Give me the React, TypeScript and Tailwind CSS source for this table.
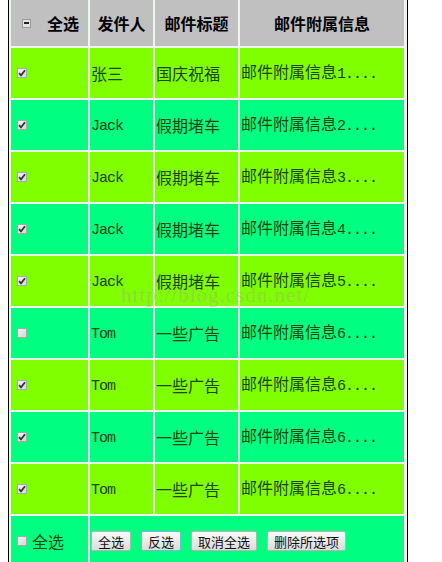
import React from 'react';

const rows = [
  { checked: true, name: '张三', latin: false, title: '国庆祝福', n: '1' },
  { checked: true, name: 'Jack', latin: true, title: '假期堵车', n: '2' },
  { checked: true, name: 'Jack', latin: true, title: '假期堵车', n: '3' },
  { checked: true, name: 'Jack', latin: true, title: '假期堵车', n: '4' },
  { checked: true, name: 'Jack', latin: true, title: '假期堵车', n: '5' },
  { checked: false, name: 'Tom', latin: true, title: '一些广告', n: '6' },
  { checked: true, name: 'Tom', latin: true, title: '一些广告', n: '6' },
  { checked: true, name: 'Tom', latin: true, title: '一些广告', n: '6' },
  { checked: true, name: 'Tom', latin: true, title: '一些广告', n: '6' },
];

function Box({ checked }: { checked: boolean }) {
  return (
    <span className="inline-flex w-[10px] h-[10px] border border-[#a8a8a8] bg-gradient-to-br from-[#f4f4f4] to-[#d6d6d6] items-center justify-center">
      {checked && (
        <svg width="8" height="8" viewBox="0 0 8 8">
          <path d="M1 4.2 L3 6.3 L7 1.2" stroke="#333" strokeWidth="1.8" fill="none" />
        </svg>
      )}
    </span>
  );
}

function Btn({ label, focused }: { label: string; focused?: boolean }) {
  return (
    <button
      className={`h-[20px] px-[6px] text-[13px] leading-none text-[#111] bg-gradient-to-b from-[#fafafa] to-[#dcdcdc] rounded-[2px] border ${
        focused ? 'border-[#7fb4d8]' : 'border-[#b4b4b4]'
      }`}
    >
      {label}
    </button>
  );
}

const mono = "font-['Liberation_Mono',monospace] text-[15px] tracking-[-1px]";

export default function App() {
  return (
    <div className="w-[442px] h-[562px] bg-white overflow-hidden relative font-['Noto_Sans_CJK_SC',sans-serif]">
      <div className="ml-[8px] w-[400px] border-x border-black bg-[#eef4ee] px-[2px]">
        <div className="grid grid-cols-[77px_63px_83px_164px] gap-[2px]">
          {/* Header */}
          <div className="h-[46px] bg-[#c0c0c0] flex items-center justify-center gap-[16px] pl-[2px]">
            <span className="w-[9px] h-[9px] border border-[#9a9a9a] bg-[#e4e4e4] flex items-center justify-center">
              <span className="w-[5px] h-[2px] bg-[#222]" />
            </span>
            <span className="text-[16px] font-bold text-black">全选</span>
          </div>
          <div className="h-[46px] bg-[#c0c0c0] flex items-center justify-center text-[16px] font-bold text-black">发件人</div>
          <div className="h-[46px] bg-[#c0c0c0] flex items-center justify-center text-[16px] font-bold text-black">邮件标题</div>
          <div className="h-[46px] bg-[#c0c0c0] flex items-center justify-center text-[16px] font-bold text-black">邮件附属信息</div>

          {rows.map((r, i) => {
            const bg = i % 2 === 0 ? 'bg-[#80ff00]' : 'bg-[#00ff80]';
            return (
              <React.Fragment key={i}>
                <div className={`h-[50px] ${bg} flex items-center pl-[6px]`}>
                  <Box checked={r.checked} />
                </div>
                <div className={`h-[50px] ${bg} flex items-center pl-[1px] text-[16px] text-[#1f4410]`}>
                  <span>{r.latin ? <span className={mono}>{r.name}</span> : r.name}</span>
                </div>
                <div className={`h-[50px] ${bg} flex items-center pl-[1px] text-[16px] text-[#1f4410]`}>{r.title}</div>
                <div className={`h-[50px] ${bg} flex items-center pl-[1px] text-[16px] text-[#1f4410]`}>
                  <span>
                    邮件附属信息<span className={mono}>{r.n}....</span>
                  </span>
                </div>
              </React.Fragment>
            );
          })}

          {/* Footer */}
          <div className="h-[50px] bg-[#00ff80] flex items-center pl-[6px] gap-[5px]">
            <Box checked={false} />
            <span className="text-[16px] text-[#1f4410]">全选</span>
          </div>
          <div className="col-span-3 h-[50px] bg-[#00ff80] flex items-center pl-[1px] gap-[10px]">
            <Btn label="全选" />
            <Btn label="反选" focused />
            <Btn label="取消全选" />
            <Btn label="删除所选项" />
          </div>
        </div>
      </div>

      {/* watermark */}
      <div className="absolute left-[121px] top-[280px] text-[21px] font-['Liberation_Serif',serif] text-[#a0a08c]/40 pointer-events-none tracking-[1px]">
        http://blog.csdn.net/
      </div>
    </div>
  );
}
